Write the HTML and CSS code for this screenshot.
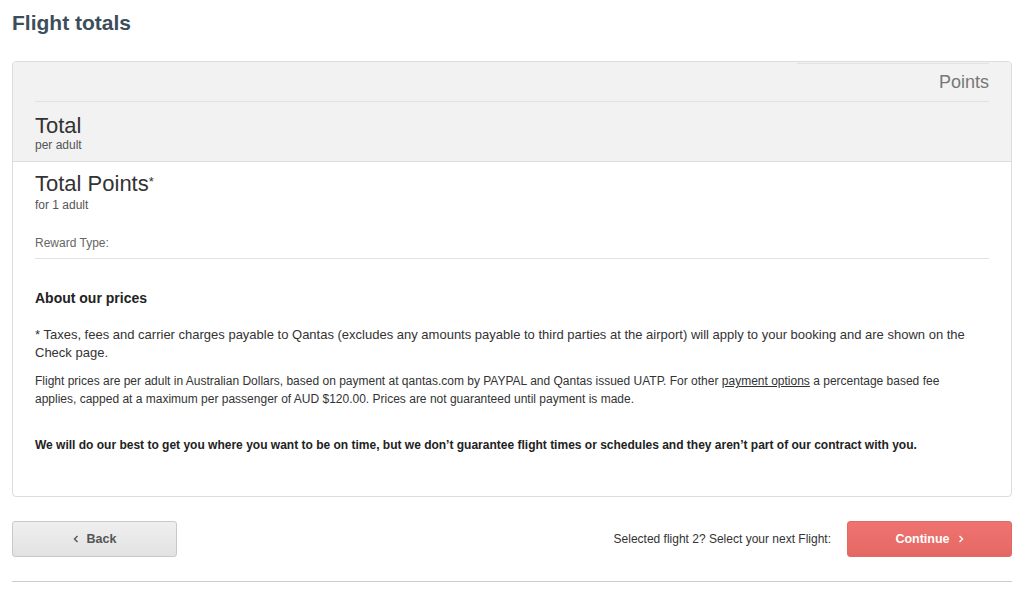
FILE: index.html
```html
<!DOCTYPE html>
<html lang="en">
<head>
  <meta charset="UTF-8" />
  <title>Flight totals</title>
  <link rel="stylesheet" href="styles.css">
</head>
<body>
  <div id="pagina">
    <h1>Flight totals</h1>

    <div class="cartao">
      <div class="cabecalho">
        <div class="linha-colunas">
          <div class="coluna-pontos">Points</div>
        </div>
        <div class="bloco-total">
          <div class="titulo-total">Total</div>
          <div class="sub-total">per adult</div>
        </div>
      </div>

      <div class="corpo">
        <div class="titulo-total">Total Points<span class="asterisco">*</span></div>
        <div class="sub-total">for 1 adult</div>

        <div class="tipo-recompensa">Reward Type:</div>

        <h2>About our prices</h2>
        <p class="nota">* Taxes, fees and carrier charges payable to Qantas (excludes any amounts payable to third parties at the airport) will apply to your booking and are shown on the Check page.</p>
        <p class="nota-pequena">Flight prices are per adult in Australian Dollars, based on payment at qantas.com by PAYPAL and Qantas issued UATP. For other <a href="#">payment options</a> a percentage based fee applies, capped at a maximum per passenger of AUD $120.00. Prices are not guaranteed until payment is made.</p>
        <p class="aviso">We will do our best to get you where you want to be on time, but we don’t guarantee flight times or schedules and they aren’t part of our contract with you.</p>
      </div>
    </div>

    <div class="acoes">
      <button class="botao voltar">
        <svg width="6" height="8" viewBox="0 0 6 8"><polyline points="4.5,1 1.5,4 4.5,7" fill="none" stroke="#555" stroke-width="1.4"/></svg>
        Back
      </button>
      <div class="direita">
        <span class="mensagem">Selected flight 2? Select your next Flight:</span>
        <button class="botao continuar">
          Continue
          <svg width="6" height="8" viewBox="0 0 6 8"><polyline points="1.5,1 4.5,4 1.5,7" fill="none" stroke="#fff" stroke-width="1.4"/></svg>
        </button>
      </div>
    </div>
  </div>
</body>
</html>
```

FILE: styles.css
```css
:root {
  --ardosia: #3c4e5b;
  --texto: #333;
  --borda: #dcdcdc;
  --cinza-fundo: #f2f2f2;
  --vermelho: #ec6d6b;
}

body {
  margin: 0;
  font-family: "Liberation Sans", Arial, sans-serif;
  color: var(--texto);
  background: #fff;
}

#pagina {
  padding: 10px 12px 0 12px;
}

h1 {
  font-size: 21px;
  line-height: 26px;
  font-weight: 700;
  color: var(--ardosia);
  margin: 0 0 25px 0;
}

.cartao {
  border: 1px solid var(--borda);
  border-radius: 4px;
  overflow: hidden;
}

.cabecalho {
  background: var(--cinza-fundo);
  border-bottom: 1px solid var(--borda);
  padding: 1px 22px 0 22px;
}

.linha-colunas {
  display: flex;
  justify-content: flex-end;
  border-bottom: 1px solid #e2e2e2;
}

.coluna-pontos {
  width: 192px;
  border-top: 1px solid #e2e2e2;
  height: 37px;
  line-height: 37px;
  font-size: 18px;
  color: #777;
  text-align: right;
}

.bloco-total {
  padding: 12px 0 8px 0;
}

.titulo-total {
  font-size: 22px;
  line-height: 24px;
  color: #333;
}

.asterisco {
  font-size: 13px;
  vertical-align: 5px;
}

.sub-total {
  font-size: 12px;
  line-height: 15px;
  color: #555;
}

.corpo {
  padding: 8px 22px 42px 22px;
}

.corpo .sub-total {
  margin-top: 2px;
}

.tipo-recompensa {
  margin-top: 23px;
  font-size: 12px;
  line-height: 14px;
  color: #666;
  padding-bottom: 8px;
  border-bottom: 1px solid #e2e2e2;
}

h2 {
  font-size: 14px;
  line-height: 16px;
  font-weight: 700;
  color: #222;
  margin: 31px 0 0 0;
}

.nota {
  font-size: 13px;
  line-height: 18px;
  margin: 20px 0 0 0;
}

.nota-pequena {
  font-size: 12px;
  line-height: 18px;
  margin: 10px 0 0 0;
  padding-right: 12px;
}

.nota-pequena a {
  color: #333;
  text-decoration: underline;
}

.aviso {
  font-size: 12px;
  line-height: 18px;
  font-weight: 700;
  color: #222;
  margin: 28px 0 0 0;
}

.acoes {
  display: flex;
  justify-content: space-between;
  align-items: center;
  margin-top: 24px;
  padding-bottom: 24px;
  border-bottom: 1px solid #ccc;
}

.direita {
  display: flex;
  align-items: center;
  gap: 16px;
}

.mensagem {
  font-size: 12px;
  color: #333;
}

.botao {
  width: 165px;
  height: 36px;
  border-radius: 3px;
  font-family: "Liberation Sans", Arial, sans-serif;
  font-size: 12.5px;
  font-weight: 700;
  display: flex;
  align-items: center;
  justify-content: center;
  gap: 8px;
  cursor: pointer;
}

.voltar {
  background: linear-gradient(#efefef, #e2e2e2);
  border: 1px solid #c9c9c9;
  color: #555;
}

.continuar {
  background: linear-gradient(#ef7371, #e46862);
  border: 1px solid #e06a66;
  color: #fff;
}
```
